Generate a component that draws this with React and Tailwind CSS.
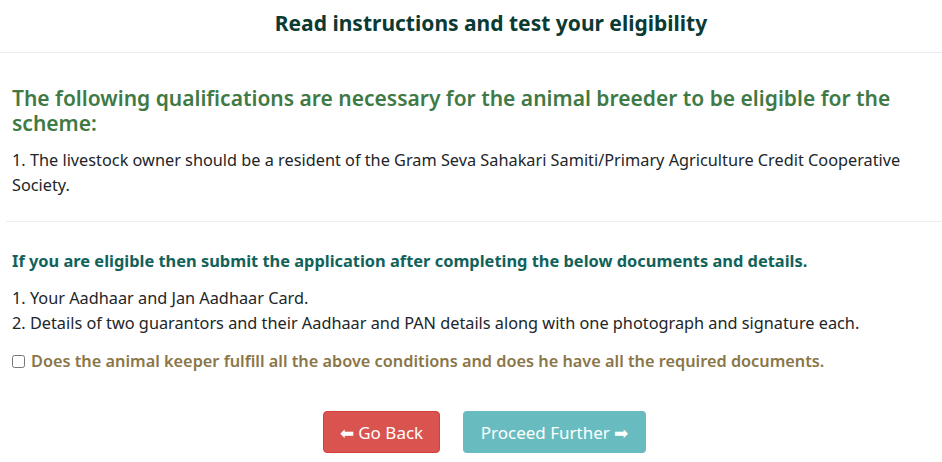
import React, { useState } from 'react'

export default function App() {
  const [agreed, setAgreed] = useState(false)

  return (
    <div className="min-h-screen bg-white" style={{ fontFamily: '"Noto Sans", "Open Sans", sans-serif' }}>
      <div className="flex h-[53px] items-start justify-center border-b border-[#e9ecef] pl-[40px] pt-[7px]">
        <h2 className="text-[21px] font-bold leading-[32px] text-[#0b3a33]">Read instructions and test your eligibility</h2>
      </div>

      <div className="px-3 pt-[33px]">
        <h3 className="text-[21px] font-semibold leading-[25px] text-[#3f7a46]">
          The following qualifications are necessary for the animal breeder to be eligible for the scheme:
        </h3>
        <p className="mt-[12px] text-[16.3px] leading-[25px] text-[#212529]">
          1. The livestock owner should be a resident of the Gram Seva Sahakari Samiti/Primary Agriculture Credit Cooperative Society.
        </p>
      </div>

      <hr className="ml-[6px] mt-[23px] border-t border-[#eeeeee]" />

      <div className="px-3 pt-[27px]">
        <h5 className="text-[16.4px] font-bold leading-[24px] text-[#11625a]">
          If you are eligible then submit the application after completing the below documents and details.
        </h5>
        <div className="mt-[13px] text-[16.3px] leading-[25px] text-[#212529]">
          <p>1. Your Aadhaar and Jan Aadhaar Card.</p>
          <p>2. Details of two guarantors and their Aadhaar and PAN details along with one photograph and signature each.</p>
        </div>
        <label className="mt-[13px] flex items-center gap-[6px] text-[16.3px] font-semibold text-[#8a7648]">
          <input
            type="checkbox"
            checked={agreed}
            onChange={(e) => setAgreed(e.target.checked)}
            className="h-[13px] w-[13px]"
          />
          Does the animal keeper fulfill all the above conditions and does he have all the required documents.
        </label>
      </div>

      <div className="mt-[38px] flex justify-center gap-[23px] pl-[27px]">
        <button className="h-[42px] w-[117px] rounded-[4px] border border-[#d43f3a] bg-[#d9534f] text-[17px] text-white">
          ⬅ Go Back
        </button>
        <button
          disabled={!agreed}
          className="h-[42px] w-[183px] rounded-[4px] bg-[#68bcbf] text-[17px] text-white"
        >
          Proceed Further ➡
        </button>
      </div>
    </div>
  )
}
